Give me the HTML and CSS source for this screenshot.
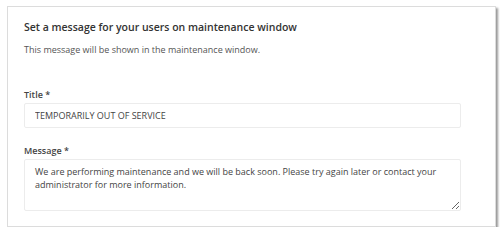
FILE: index.html
```html
<!DOCTYPE html>
<html lang="en">
<head>
    <meta charset="UTF-8">
    <title>Maintenance message</title>
    <link rel="stylesheet" href="styles.css">
</head>
<body>
    <div class="card">
        <h2 class="card-title">Set a message for your users on maintenance window</h2>
        <p class="card-hint">This message will be shown in the maintenance window.</p>

        <div class="field">
            <label class="field-label" for="title">Title *</label>
            <input id="title" class="field-input" type="text" value="TEMPORARILY OUT OF SERVICE">
        </div>

        <div class="field">
            <label class="field-label" for="message">Message *</label>
            <textarea id="message" class="field-input field-area">We are performing maintenance and we will be back soon. Please try again later or contact your administrator for more information.</textarea>
        </div>
    </div>
</body>
</html>
```

FILE: styles.css
```css
* {
    box-sizing: border-box;
}
body {
    margin: 0;
    padding: 6px 9px 0 7px;
    font-family: "Open Sans", sans-serif;
    background: #fff;
}

.card {
    width: 489px;
    height: 221px;
    border: 1px solid #dcdcdc;
    background: #fff;
    box-shadow: 2px 2px 2px #9a9a9a;
    padding: 12px 34px 0 16px;
}

.card-title {
    margin: 0;
    font-size: 10.5px;
    line-height: 16px;
    font-weight: 600;
    color: #333;
}

.card-hint {
    margin: 8px 0 32px;
    font-size: 9px;
    line-height: 13px;
    color: #555;
}

.field {
    margin-bottom: 16px;
}

.field-label {
    display: block;
    font-size: 9px;
    line-height: 13px;
    font-weight: 600;
    color: #444;
    margin-bottom: 2px;
}

.field-input {
    display: block;
    width: 100%;
    height: 25px;
    padding: 0 10px;
    border: 1px solid #ececec;
    border-radius: 2px;
    font-family: inherit;
    font-size: 9px;
    color: #444;
    background: #fff;
}

.field-area {
    height: 52px;
    padding: 5px 10px;
    line-height: 13px;
    resize: vertical;
}
```
